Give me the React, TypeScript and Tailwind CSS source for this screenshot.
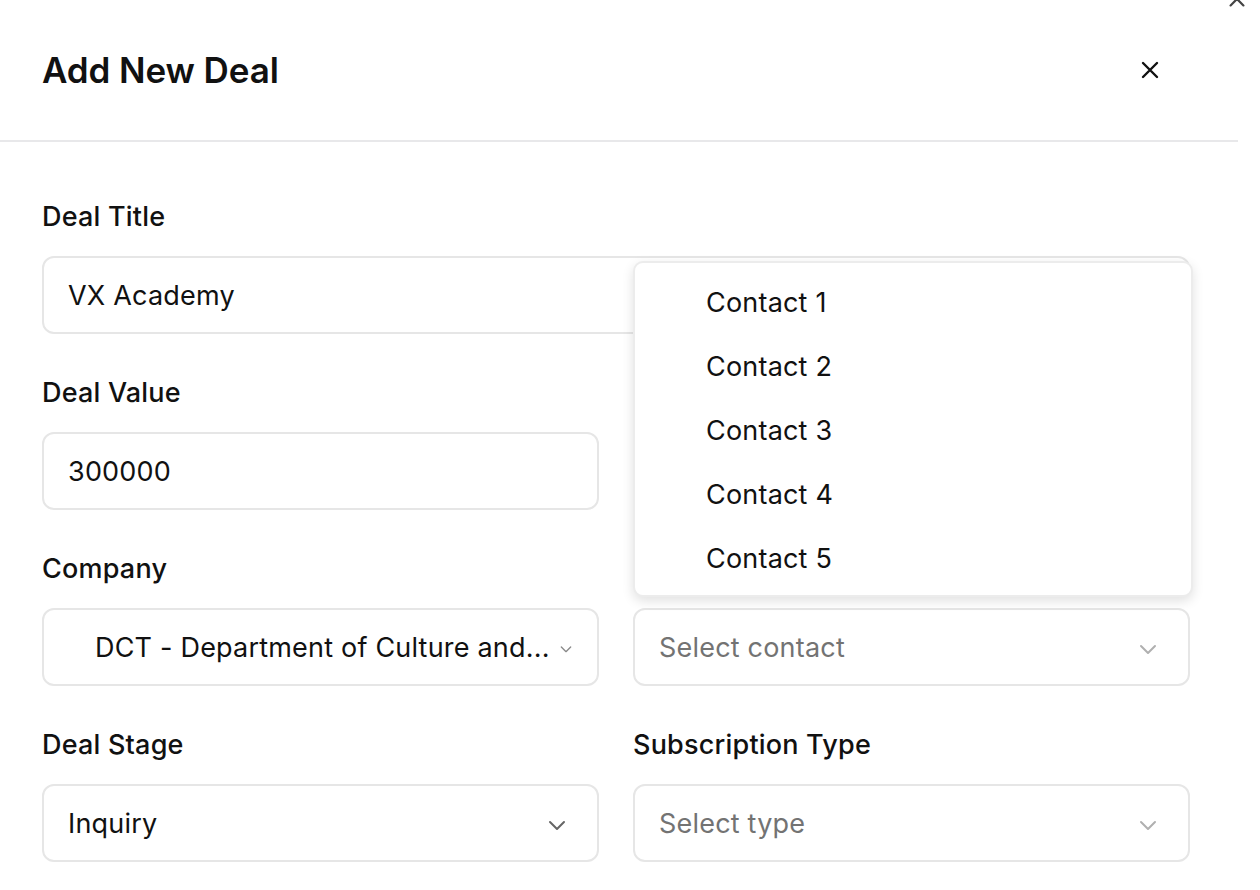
import React from 'react';

const contacts = ['Contact 1', 'Contact 2', 'Contact 3', 'Contact 4', 'Contact 5'];

const XIcon = ({ className }: { className?: string }) => (
  <svg viewBox="0 0 24 24" fill="none" stroke="currentColor" strokeWidth={2.4} strokeLinecap="round" className={className}>
    <path d="M5 5l14 14M19 5L5 19" />
  </svg>
);

const Chevron = ({ className }: { className?: string }) => (
  <svg viewBox="0 0 24 24" fill="none" stroke="currentColor" strokeWidth={2} strokeLinecap="round" strokeLinejoin="round" className={className}>
    <path d="M5 9l7 7 7-7" />
  </svg>
);

const Label = ({ children }: { children: React.ReactNode }) => (
  <label className="block h-[36px] leading-[36px] text-[27px] font-medium text-[#111] tracking-[0.2px] mb-[21px]">{children}</label>
);

const Field = ({ children }: { children: React.ReactNode }) => (
  <div className="h-[78px] rounded-[12px] border-2 border-[#e6e6e6] bg-white flex items-center pt-[3px] text-[27px] text-[#111] tracking-[0.2px]">
    {children}
  </div>
);

export default function App() {
  return (
    <div className="relative w-[1260px] h-[890px] bg-white overflow-hidden font-['Inter',sans-serif]">
      {/* clipped close button of the outer layer */}
      <XIcon className="absolute left-[1226px] top-[-12px] w-[22px] h-[22px] text-[#444]" />

      <div className="w-[1238px]">
        <div className="h-[142px] flex items-center justify-between pl-[42px] pr-[76px] border-b-2 border-[#e8e8ea]">
          <h2 className="text-[35px] font-semibold text-[#111] tracking-[-0.1px]">Add New Deal</h2>
          <button className="w-[24px] h-[24px] text-[#111]">
            <XIcon className="w-[24px] h-[24px]" />
          </button>
        </div>

        <div className="pl-[42px] pr-[48px] pt-[57px] grid grid-cols-2 gap-x-[34px] gap-y-[41px]">
          <div className="col-span-2">
            <Label>Deal Title</Label>
            <Field>
              <span className="pl-[24px]">VX Academy</span>
            </Field>
          </div>

          <div>
            <Label>Deal Value</Label>
            <Field>
              <span className="pl-[24px]">300000</span>
            </Field>
          </div>
          <div />

          <div>
            <Label>Company</Label>
            <Field>
              <span className="pl-[51px] truncate">DCT - Department of Culture and...</span>
              <Chevron className="ml-[8px] w-[16px] h-[16px] text-[#8a8a8a] shrink-0" />
            </Field>
          </div>
          <div className="relative">
            {/* label sits under the open menu */}
            <div className="h-[36px] mb-[21px]" />
            <Field>
              <span className="pl-[24px] text-[#737373] flex-1">Select contact</span>
              <Chevron className="mr-[28px] w-[24px] h-[24px] text-[#b0b0b0]" />
            </Field>

            <div className="absolute left-0 right-[-3px] top-[-290px] h-[336px] rounded-[10px] border-2 border-[#ececec] bg-white py-[8px] shadow-[0_4px_12px_rgba(0,0,0,0.12)]">
              {contacts.map((c) => (
                <div key={c} className="h-[64px] flex items-center pl-[71px] text-[27px] tracking-[0.2px] text-[#111]">
                  {c}
                </div>
              ))}
            </div>
          </div>

          <div>
            <Label>Deal Stage</Label>
            <Field>
              <span className="pl-[24px] flex-1">Inquiry</span>
              <Chevron className="mr-[28px] w-[24px] h-[24px] text-[#666]" />
            </Field>
          </div>
          <div>
            <Label>Subscription Type</Label>
            <Field>
              <span className="pl-[24px] text-[#737373] flex-1">Select type</span>
              <Chevron className="mr-[28px] w-[24px] h-[24px] text-[#b0b0b0]" />
            </Field>
          </div>
        </div>
      </div>
    </div>
  );
}
